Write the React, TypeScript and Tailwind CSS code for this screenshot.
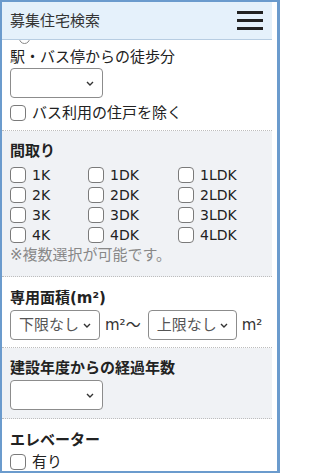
import React from 'react';

const font = { fontFamily: '"DejaVu Sans", "Noto Sans CJK JP", sans-serif' };

function Checkbox({ label, small }: { label: string; small?: boolean }) {
  return (
    <label className="flex items-center gap-[6px] h-[20px] leading-[20px]">
      <span className="w-[16px] h-[16px] shrink-0 rounded-[4px] border border-[#7a7a7a] bg-white" />
      <span className={small ? 'text-[14px]' : ''}>{label}</span>
    </label>
  );
}

function Chevron() {
  return (
    <svg width="8" height="5" viewBox="0 0 8 5" className="shrink-0">
      <path d="M1 1 L4 4 L7 1" fill="none" stroke="#333" strokeWidth="1.4" />
    </svg>
  );
}

function Select({ text, width }: { text?: string; width: string }) {
  return (
    <div
      className={`${width} h-[30px] flex items-center justify-between pl-[8px] pr-[8px] rounded-[4px] border border-[#8c8c8c] bg-white text-[#555]`}
    >
      <span>{text ?? ''}</span>
      <Chevron />
    </div>
  );
}

const madori = ['1K', '1DK', '1LDK', '2K', '2DK', '2LDK', '3K', '3DK', '3LDK', '4K', '4DK', '4LDK'];

export default function App() {
  return (
    <div
      className="w-[280px] h-[473px] overflow-hidden bg-white border-l-2 border-t-2 border-r-[3px] border-b-2 border-[#6b9bcd] text-[15px] text-[#222]"
      style={font}
    >
      <div className="w-[270px]">
        {/* header */}
        <header className="h-[38px] flex items-center justify-between pl-[8px] pr-[8px] bg-[#e5f1fb] border-b border-[#b7cde2]">
          <span className="text-[15px] text-[#333] pt-[2px]">募集住宅検索</span>
          <div className="flex flex-col gap-[5px] w-[26px] mr-[1px]">
            <span className="block h-[3px] bg-[#222]" />
            <span className="block h-[3px] bg-[#222]" />
            <span className="block h-[3px] bg-[#222]" />
          </div>
        </header>

        {/* 徒歩分 */}
        <section className="px-[8px] pb-[7px] border-b border-dotted border-[#bdbdbd]">
          <div className="h-[5px] overflow-hidden">
            <div className="ml-[9px] -mt-[7px] w-[11px] h-[11px] rounded-full border border-[#888]" />
          </div>
          <div className="mt-[2px] leading-[20px]">駅・バス停からの徒歩分</div>
          <div className="mt-[1px]">
            <Select width="w-[93px]" />
          </div>
          <div className="mt-[5px]">
            <Checkbox label="バス利用の住戸を除く" />
          </div>
        </section>

        {/* 間取り */}
        <section className="px-[8px] pt-[10px] pb-[11px] bg-[#f0f2f5] border-b border-dotted border-[#bdbdbd]">
          <div className="font-bold leading-[20px]">間取り</div>
          <div className="mt-[4px] grid grid-cols-[78px_90px_1fr]">
            {madori.map((m) => (
              <Checkbox key={m} label={m} small />
            ))}
          </div>
          <div className="leading-[20px] text-[#888]">※複数選択が可能です。</div>
        </section>

        {/* 専用面積 */}
        <section className="px-[8px] pt-[11px] pb-[7px] border-b border-dotted border-[#bdbdbd]">
          <div className="font-bold leading-[20px]">専用面積(m²)</div>
          <div className="mt-[2px] flex items-center">
            <Select text="下限なし" width="w-[90px]" />
            <span className="ml-[5px] text-[#333]">m²～</span>
            <div className="ml-[7px]">
              <Select text="上限なし" width="w-[89px]" />
            </div>
            <span className="ml-[5px] text-[#333]">m²</span>
          </div>
        </section>

        {/* 経過年数 */}
        <section className="px-[8px] pt-[10px] pb-[8px] bg-[#f0f2f5] border-b border-dotted border-[#bdbdbd]">
          <div className="font-bold leading-[20px]">建設年度からの経過年数</div>
          <div className="mt-[2px]">
            <Select width="w-[93px]" />
          </div>
        </section>

        {/* エレベーター */}
        <section className="px-[8px] pt-[11px]">
          <div className="font-bold leading-[20px]">エレベーター</div>
          <div className="mt-[2px]">
            <Checkbox label="有り" />
          </div>
        </section>
      </div>
    </div>
  );
}
